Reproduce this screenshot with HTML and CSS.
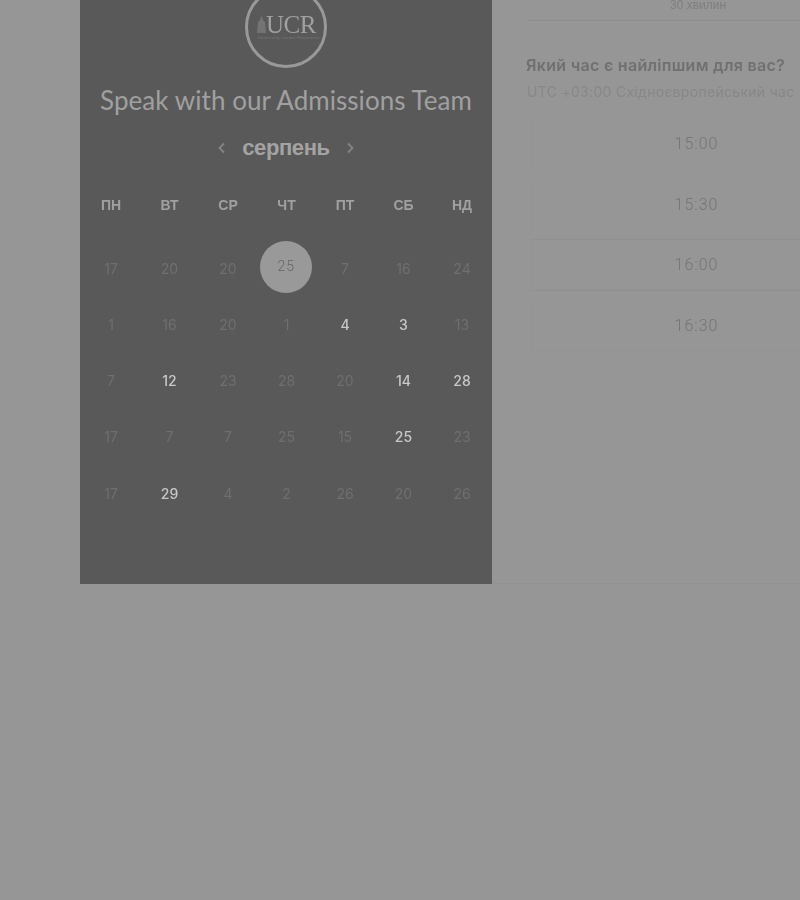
FILE: index.html
```html
<!DOCTYPE html>
<html lang="uk">
<head>
<meta charset="UTF-8" />
<title>Speak with our Admissions Team</title>
<link rel="stylesheet" href="styles.css">
</head>
<body>
<div class="page">
  <section class="calendar">
    <div class="logo">
      <svg class="logo-tower" width="9" height="18" viewBox="0 0 9 18" aria-hidden="true">
        <path d="M4.5 0 L6 5 L8 7 L9 18 L0 18 L1 7 L3 5 Z" fill="#737373" />
      </svg>
      <span class="logo-name">UCR</span>
      <span class="logo-tag">University Career Resources</span>
    </div>
    <h1>Speak with our Admissions Team</h1>
    <div class="month">
      <svg class="arrow" width="9" height="12" viewBox="0 0 9 12" aria-hidden="true"><path d="M7 1.5 L2.5 6 L7 10.5" /></svg>
      <span>серпень</span>
      <svg class="arrow" width="9" height="12" viewBox="0 0 9 12" aria-hidden="true"><path d="M2 1.5 L6.5 6 L2 10.5" /></svg>
    </div>
    <div class="weekdays">
      <span>ПН</span><span>ВТ</span><span>СР</span><span>ЧТ</span><span>ПТ</span><span>СБ</span><span>НД</span>
    </div>
    <div class="days">
      <span>17</span><span>20</span><span>20</span><span class="selected">25</span><span>7</span><span>16</span><span>24</span>
      <span>1</span><span>16</span><span>20</span><span>1</span><span class="open">4</span><span class="open">3</span><span>13</span>
      <span>7</span><span class="open">12</span><span>23</span><span>28</span><span>20</span><span class="open">14</span><span class="open">28</span>
      <span>17</span><span>7</span><span>7</span><span>25</span><span>15</span><span class="open">25</span><span>23</span>
      <span>17</span><span class="open">29</span><span>4</span><span>2</span><span>26</span><span>20</span><span>26</span>
    </div>
  </section>
  <section class="times">
    <div class="duration">30 хвилин</div>
    <h2>Який час є найліпшим для вас?</h2>
    <p class="zone">UTC +03:00 Східноєвропейський час</p>
    <ul class="slots">
      <li>15:00</li>
      <li>15:30</li>
      <li class="edge">16:00</li>
      <li>16:30</li>
    </ul>
  </section>
</div>
</body>
</html>
```

FILE: styles.css
```css
* {
  box-sizing: border-box;
}
html, body {
  height: 100%;
}
body {
  margin: 0;
  overflow: hidden;
  background: #969696;
  font-family: "Liberation Sans", Arial, sans-serif;
}
.page {
  display: flex;
  width: 800px;
  margin-top: -40px;
  padding-left: 80px;
  filter: blur(0.45px);
}

/* left panel */
.calendar {
  flex: none;
  width: 412px;
  height: 624px;
  background: #595959;
  padding-top: 26px;
}
.logo {
  position: relative;
  width: 82px;
  height: 82px;
  margin: 0 auto;
  border: 3px solid #999;
  border-radius: 50%;
}
.logo-tower {
  position: absolute;
  left: 9px;
  top: 26px;
}
.logo-name {
  position: absolute;
  left: 18px;
  top: 26px;
  font-family: "Liberation Serif", serif;
  font-size: 25px;
  letter-spacing: -0.5px;
  line-height: 20px;
  color: #a0a0a0;
}
.logo-tag {
  position: absolute;
  left: 10px;
  top: 46px;
  font-size: 4px;
  line-height: 5px;
  letter-spacing: 0.4px;
  white-space: nowrap;
  color: #7a7a7a;
}
h1 {
  margin: 14px 0 0;
  text-align: center;
  font-family: Lato, sans-serif;
  font-size: 26px;
  font-weight: 400;
  letter-spacing: 0.05px;
  line-height: 36px;
  color: #a0a0a0;
}
.month {
  display: flex;
  justify-content: center;
  align-items: center;
  gap: 16px;
  height: 30px;
  margin-top: 15px;
  font-size: 22px;
  font-weight: 700;
  letter-spacing: -0.4px;
  color: #a3a3a3;
}
.arrow {
  fill: none;
  stroke: #858585;
  stroke-width: 1.8;
}
.weekdays, .days {
  display: grid;
  grid-template-columns: repeat(7, 58.5px);
  justify-content: center;
  padding-left: 1px;
  text-align: center;
}
.weekdays {
  margin-top: 32px;
  font-size: 14px;
  font-weight: 700;
  line-height: 20px;
  color: #a0a0a0;
}
.days {
  margin-top: 25px;
  grid-auto-rows: 56.25px;
  font-family: Inter, sans-serif;
  font-size: 14px;
  color: #6f6f6f;
}
.days span {
  display: flex;
  align-items: center;
  justify-content: center;
}
.days .open {
  color: #c8c8c8;
  font-weight: 500;
}
.days .selected {
  width: 52px;
  height: 52px;
  margin: 1px 0 0 3px;
  padding-bottom: 2px;
  border-radius: 50%;
  background: #999;
  font-family: Roboto, sans-serif;
  font-weight: 300;
  letter-spacing: 1px;
  color: #666;
}

/* right side */
.times {
  flex: none;
  width: 308px;
  height: 624px;
  overflow: hidden;
  padding-left: 34px;
  border-bottom: 1px solid #929292;
}
.duration {
  width: 342px;
  height: 61px;
  margin-left: 1px;
  padding-top: 38px;
  text-align: center;
  font-size: 12px;
  color: #7f7f7f;
  border-bottom: 1px solid #8f8f8f;
}
h2 {
  margin: 33px 0 0;
  font-family: Inter, sans-serif;
  font-size: 16px;
  font-weight: 600;
  letter-spacing: 0.3px;
  line-height: 22px;
  white-space: nowrap;
  color: #707070;
}
.zone {
  margin: 6px 0 0 1px;
  font-family: Inter, sans-serif;
  font-size: 14px;
  letter-spacing: 0.3px;
  line-height: 20px;
  white-space: nowrap;
  color: #878787;
}
.slots {
  list-style: none;
  width: 331px;
  margin: 16px 0 0 5px;
  padding: 0;
}
.slots li {
  height: 52px;
  margin-bottom: 8.5px;
  line-height: 50px;
  text-align: center;
  font-family: Roboto, sans-serif;
  font-weight: 300;
  font-size: 16px;
  letter-spacing: 1px;
  color: #757575;
  border: 1px solid #949494;
}
.slots .edge {
  border-color: #919191 #949494;
}
```
